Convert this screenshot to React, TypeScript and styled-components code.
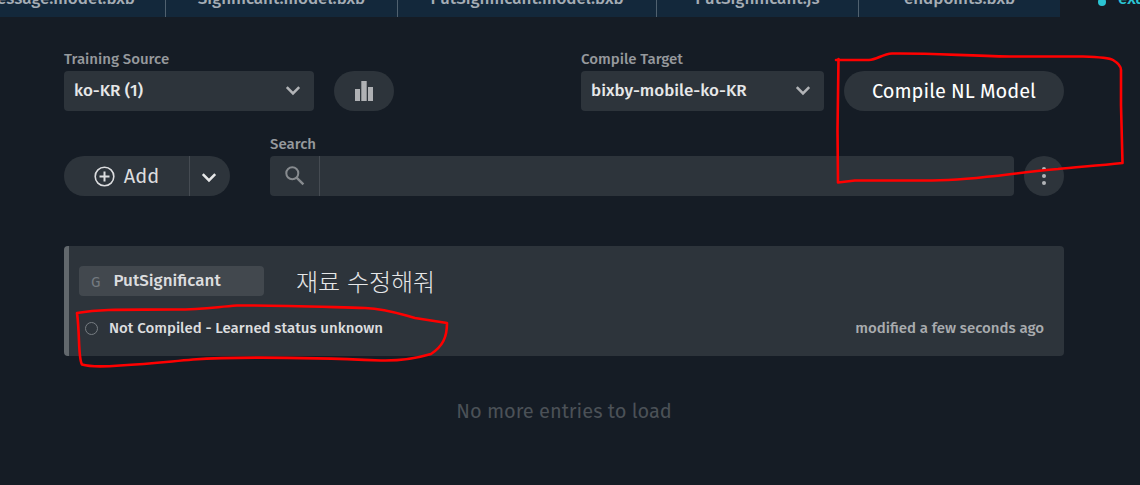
import React from "react";
import styled, { createGlobalStyle } from "styled-components";

const GlobalStyle = createGlobalStyle`
  *, *::before, *::after { box-sizing: border-box; }
  body {
    margin: 0;
    background: #151c25;
    color: #dcdddf;
    font-family: "Fira Sans", "Noto Sans", "Noto Sans CJK KR", sans-serif;
    font-weight: 400;
  }
  button, input, select { font: inherit; color: inherit; }
`;

const Page = styled.div`
  position: relative;
  min-height: 100vh;
  overflow: hidden;
`;

const TabBar = styled.nav`
  display: flex;
  align-items: flex-end;
  height: 17px;
  overflow: hidden;
`;

const Tab = styled.a<{ $width: number; $align?: string }>`
  display: flex;
  flex: 0 0 ${(p) => p.$width}px;
  min-width: 0;
  justify-content: ${(p) => p.$align ?? "center"};
  padding: 0 ${(p) => (p.$align ? "30px" : "0")} 8px 0;
  background: #13283b;
  border-right: 1px solid #50616f;
  color: #a5adb5;
  font-size: 17px;
  font-weight: 500;
  line-height: 20px;
  white-space: nowrap;
  text-decoration: none;
  &:nth-last-child(2) { border-right: 0; }
`;

const ActiveTab = styled.a`
  display: flex;
  align-items: center;
  gap: 12px;
  padding: 0 0 8px 38px;
  color: #2bc4d3;
  font-size: 17px;
  font-weight: 500;
  line-height: 20px;
  white-space: nowrap;
  text-decoration: none;
  &::before {
    content: "";
    width: 8px;
    height: 8px;
    margin-top: 6px;
    border-radius: 50%;
    background: currentColor;
  }
`;

const Main = styled.main`
  padding: 33px 76px 0 64px;
`;

const Row = styled.div`
  display: flex;
  align-items: flex-end;
`;

const SearchRow = styled(Row)`
  margin-top: 24px;
`;

const Spacer = styled.div`
  flex: 1;
`;

const Field = styled.div<{ $width?: number }>`
  display: flex;
  flex-direction: column;
  gap: 3px;
  flex: ${(p) => (p.$width ? `0 0 ${p.$width}px` : "1")};
`;

const Label = styled.label`
  color: #96999d;
  font-size: 15px;
  font-weight: 500;
  line-height: 18px;
`;

const SelectBox = styled.div`
  display: grid;
  align-items: center;
  > * { grid-area: 1 / 1; }
  > svg { justify-self: end; margin-right: 13px; pointer-events: none; }
`;

const Select = styled.select`
  appearance: none;
  width: 100%;
  height: 40px;
  padding: 0 40px 2px 10px;
  border: 0;
  border-radius: 4px;
  background: #2d343b;
  color: #e6e7e8;
  font-size: 17px;
  font-weight: 500;
`;

const PillButton = styled.button<{ $width: number }>`
  display: flex;
  align-items: center;
  justify-content: center;
  flex: 0 0 ${(p) => p.$width}px;
  height: 40px;
  margin-left: 20px;
  padding: 0;
  border: 0;
  border-radius: 20px;
  background: #2d343b;
  color: #fff;
  font-size: 20px;
`;

const DotsButton = styled(PillButton)`
  margin-left: 10px;
`;

const SplitButton = styled.div`
  display: flex;
  flex: 0 0 166px;
  height: 40px;
  margin-right: 40px;
  border-radius: 20px;
  background: #2d343b;
  overflow: hidden;
`;

const AddButton = styled.button`
  display: flex;
  align-items: center;
  justify-content: center;
  gap: 9px;
  flex: 1;
  padding: 0;
  border: 0;
  border-right: 1px solid #454b52;
  background: none;
  font-size: 20px;
`;

const MoreButton = styled.button`
  display: flex;
  align-items: center;
  justify-content: center;
  width: 40px;
  padding: 4px 2px 0 0;
  border: 0;
  background: none;
`;

const SearchBox = styled.div`
  display: flex;
  height: 40px;
  border-radius: 4px;
  background: #2d343b;
  overflow: hidden;
`;

const SearchIcon = styled.span`
  display: flex;
  align-items: center;
  justify-content: center;
  flex: 0 0 50px;
  border-right: 1px solid #454b52;
`;

const SearchInput = styled.input`
  flex: 1;
  min-width: 0;
  padding: 0 10px;
  border: 0;
  outline: 0;
  background: none;
  font-size: 17px;
`;

const Card = styled.article`
  margin-top: 50px;
  padding: 20px 20px 18px 10px;
  border-left: 5px solid #62686d;
  border-radius: 4px;
  background: #2d343b;
`;

const CardRow = styled.div`
  display: flex;
  align-items: center;
`;

const Goal = styled.div`
  display: flex;
  align-items: center;
  gap: 13px;
  flex: 0 0 185px;
  height: 30px;
  padding: 0 12px 2px;
  border-radius: 4px;
  background: #42484e;
  font-size: 17px;
  font-weight: 500;
`;

const GoalMark = styled.span`
  padding-top: 3px;
  color: #747a80;
  font-size: 15px;
  font-weight: 400;
`;

const Utterance = styled.span`
  margin-left: 32px;
  font-family: "Noto Sans CJK KR", sans-serif;
  font-size: 24px;
  font-weight: 300;
  line-height: 30px;
  color: #e6e7e8;
`;

const StatusRow = styled(CardRow)`
  justify-content: space-between;
  margin-top: 22px;
  font-size: 15px;
  font-weight: 500;
  line-height: 20px;
`;

const Status = styled.span`
  display: flex;
  align-items: center;
  gap: 11px;
  padding-left: 6px;
  &::before {
    content: "";
    width: 13px;
    height: 13px;
    border: 1px solid #777d82;
    border-radius: 50%;
  }
`;

const Modified = styled.time`
  color: #a9acaf;
`;

const EndNote = styled.p`
  margin: 42px 0 0;
  color: #4b5157;
  font-size: 20px;
  line-height: 26px;
  text-align: center;
`;

const Marks = styled.svg`
  position: absolute;
  top: 0;
  left: 0;
  pointer-events: none;
`;

const Chevron = ({ color = "#b2b4b7" }: { color?: string }) => (
  <svg width="16" height="12" viewBox="0 0 16 12" fill="none" aria-hidden="true">
    <path d="M1.8 2.2 8 8.4l6.2-6.2" stroke={color} strokeWidth="2.6" />
  </svg>
);

export default function App() {
  return (
    <>
      <GlobalStyle />
      <Page>
        <TabBar>
          <Tab href="#message" $width={166} $align="flex-end">essage.model.bxb</Tab>
          <Tab href="#significant" $width={232}>Significant.model.bxb</Tab>
          <Tab href="#put-model" $width={259}>PutSignificant.model.bxb</Tab>
          <Tab href="#put-js" $width={202}>PutSignificant.js</Tab>
          <Tab href="#endpoints" $width={201}>endpoints.bxb</Tab>
          <ActiveTab href="#example">exa</ActiveTab>
        </TabBar>
        <Main>
          <Row>
            <Field $width={250}>
              <Label htmlFor="source">Training Source</Label>
              <SelectBox>
                <Select id="source"><option>ko-KR (1)</option></Select>
                <Chevron />
              </SelectBox>
            </Field>
            <PillButton $width={60} aria-label="Statistics">
              <svg width="18" height="20" viewBox="0 0 18 20" fill="#afb1b4" aria-hidden="true">
                <path d="M0 8h5v12H0zM6.3 0h5.4v20H6.3zM13 6h5v14h-5z" />
              </svg>
            </PillButton>
            <Spacer />
            <Field $width={243}>
              <Label htmlFor="target">Compile Target</Label>
              <SelectBox>
                <Select id="target"><option>bixby-mobile-ko-KR</option></Select>
                <Chevron />
              </SelectBox>
            </Field>
            <PillButton $width={220}>Compile NL Model</PillButton>
          </Row>
          <SearchRow>
            <SplitButton>
              <AddButton>
                <svg width="21" height="21" viewBox="0 0 21 21" fill="none" stroke="#dcdddf" aria-hidden="true">
                  <circle cx="10.5" cy="10.5" r="9.3" strokeWidth="1.6" />
                  <path d="M10.500 5.500v10M5.500 10.500h10" strokeWidth="2" />
                </svg>
                Add
              </AddButton>
              <MoreButton aria-label="More add options"><Chevron color="#e6e7e8" /></MoreButton>
            </SplitButton>
            <Field>
              <Label htmlFor="search">Search</Label>
              <SearchBox>
                <SearchIcon>
                  <svg width="20" height="20" viewBox="0 0 20 20" fill="none" stroke="#878b8f" aria-hidden="true">
                    <circle cx="7.3" cy="7.3" r="6" strokeWidth="2" />
                    <path d="m11.600 11.600 6.800 6.800" strokeWidth="2.4" />
                  </svg>
                </SearchIcon>
                <SearchInput id="search" type="text" />
              </SearchBox>
            </Field>
            <DotsButton $width={40} aria-label="Menu">
              <svg width="4" height="18" viewBox="0 0 4 18" fill="#b2b4b7" aria-hidden="true">
                <circle cx="2" cy="2" r="2" />
                <circle cx="2" cy="9" r="2" />
                <circle cx="2" cy="16" r="2" />
              </svg>
            </DotsButton>
          </SearchRow>
          <Card>
            <CardRow>
              <Goal><GoalMark>G</GoalMark>PutSignificant</Goal>
              <Utterance lang="ko">재료 수정해줘</Utterance>
            </CardRow>
            <StatusRow>
              <Status>Not Compiled - Learned status unknown</Status>
              <Modified>modified a few seconds ago</Modified>
            </StatusRow>
          </Card>
          <EndNote>No more entries to load</EndNote>
        </Main>
        <Marks width="1140" height="485" viewBox="0 0 1140 485" fill="none" stroke="#f00" strokeWidth="2.6" strokeLinecap="round" strokeLinejoin="round" aria-hidden="true">
          <path d="M836 60h33c8 0 13-6 23-6.500C930 53 960 55.500 1010 56.500H1083C1100 57 1109 57.500 1113 60 1118 63 1121 67 1121 70L1121 105 1122.500 163C1095 166 1075 167 1058 169 1010 173 980 180 932 180.500H855L838 182.500 837.500 130 838.500 59" />
          <path d="M77 313C105 308.500 130 310 175 309.500 205 309.500 215 307 237 305.500 270 305 310 306.500 365 308 388 309 403 315 415 318L447 323C447 337 443 346 431 354 414 359 400 361 381 360.500 320 358 245 356 193 359.500 165 362 150 364 120 365.500 100 367 90 367 82 364.500 78 358 80 335 77 313Z" />
        </Marks>
      </Page>
    </>
  );
}
